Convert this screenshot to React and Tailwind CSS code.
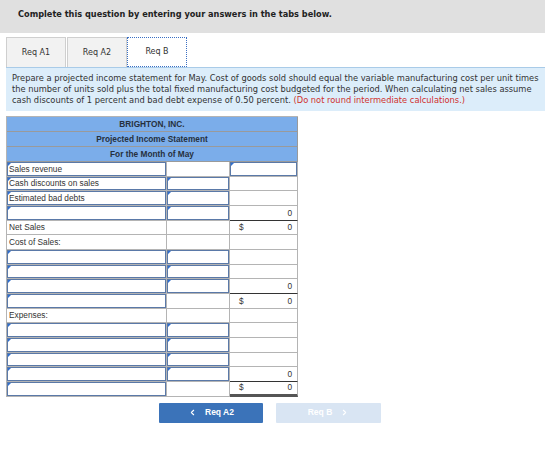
import { ChevronLeft, ChevronRight } from 'lucide-react';

const verdana = { fontFamily: '"DejaVu Sans", Verdana, sans-serif' };
const arial = { fontFamily: '"Liberation Sans", Arial, sans-serif' };

// c1/c2/c3 cell kinds: t = text, s = select (triangle), i = input, b = blank, v = value
const rows = [
  { c1: ['s', 'Sales revenue'], c2: ['b'], c3: ['i'] },
  { c1: ['s', 'Cash discounts on sales'], c2: ['i'], c3: ['b'] },
  { c1: ['s', 'Estimated bad debts'], c2: ['i'], c3: ['b'] },
  { c1: ['s'], c2: ['i'], c3: ['v', '0'], line: 'single' },
  { c1: ['t', 'Net Sales'], c2: ['b'], c3: ['v', '0', true] },
  { c1: ['t', 'Cost of Sales:'], c2: ['b'], c3: ['b'] },
  { c1: ['s'], c2: ['i'], c3: ['b'] },
  { c1: ['s'], c2: ['i'], c3: ['b'] },
  { c1: ['s'], c2: ['i'], c3: ['v', '0'], line: 'single' },
  { c1: ['s'], c2: ['b'], c3: ['v', '0', true] },
  { c1: ['t', 'Expenses:'], c2: ['b'], c3: ['b'] },
  { c1: ['s'], c2: ['i'], c3: ['b'] },
  { c1: ['s'], c2: ['i'], c3: ['b'] },
  { c1: ['s'], c2: ['i'], c3: ['b'] },
  { c1: ['s'], c2: ['i'], c3: ['v', '0'], line: 'single' },
  { c1: ['s'], c2: ['b'], c3: ['v', '0', true], line: 'double' },
];

const Cell = ({ kind, text, dollar }) => {
  if (kind === 's' || kind === 'i') {
    return (
      <div className="relative h-full border-[1.5px] border-[#5a79a8] bg-white flex items-center pl-[1px] text-[#333]">
        <span className="absolute top-0 left-0 w-0 h-0 border-t-[3px] border-t-[#2f6fd0] border-r-[3px] border-r-transparent" />
        {text}
      </div>
    );
  }
  if (kind === 't') {
    return <div className="h-full flex items-center pl-[2px] text-[#333]">{text}</div>;
  }
  if (kind === 'v') {
    return (
      <div className="h-full flex items-center justify-between pl-[9px] pr-[5px] text-[#333]">
        <span>{dollar ? '$' : ''}</span>
        <span>{text}</span>
      </div>
    );
  }
  return <div className="h-full" />;
};

const Row = ({ row }) => {
  const c3Border =
    row.line === 'double'
      ? 'border-b-[3px] border-b-[#555]'
      : row.line === 'single'
      ? 'border-b border-b-[#333]'
      : 'border-b border-b-[#b4b4b4]';
  return (
    <div className="flex h-[14.67px]">
      <div className="w-[160px] border-r border-b border-[#b4b4b4]">
        <Cell kind={row.c1[0]} text={row.c1[1]} />
      </div>
      <div className="w-[63px] border-r border-b border-[#b4b4b4]">
        <Cell kind={row.c2[0]} text={row.c2[1]} />
      </div>
      <div className={`w-[68px] border-r border-r-[#b4b4b4] ${c3Border}`}>
        <Cell kind={row.c3[0]} text={row.c3[1]} dollar={row.c3[2]} />
      </div>
    </div>
  );
};

export default function App() {
  return (
    <div className="w-[560px] h-[459px] bg-white relative overflow-hidden">
      <div className="w-[545px] h-[33px] bg-[#e0e0e0] pl-[18px] pt-[8px]">
        <p className="text-[8.2px] font-bold text-[#222]" style={verdana}>
          Complete this question by entering your answers in the tabs below.
        </p>
      </div>

      <div className="ml-[6px] w-[539px] mt-[4px] flex border-b border-b-[#a9cbe8]" style={verdana}>
        <div className="w-[60px] h-[30px] bg-[#f2f2f2] border border-[#cfcfcf] border-b-0 flex items-center justify-center text-[8px] text-[#333]">
          Req A1
        </div>
        <div className="ml-[1px] w-[60px] h-[30px] bg-[#f2f2f2] border border-[#cfcfcf] border-b-0 flex items-center justify-center text-[8px] text-[#333]">
          Req A2
        </div>
        <div className="w-[60px] h-[30px] bg-white border border-dotted border-[#3a6fc4] flex items-center justify-center text-[8px] text-[#333]">
          Req B
        </div>
      </div>

      <div
        className="ml-[6px] w-[539px] bg-[#dcedfa] px-[6px] pt-[5px] pb-[5px] text-[8.3px] leading-[11px] text-[#333] whitespace-nowrap"
        style={verdana}
      >
        Prepare a projected income statement for May. Cost of goods sold should equal the variable manufacturing cost per unit times
        <br />
        the number of units sold plus the total fixed manufacturing cost budgeted for the period. When calculating net sales assume
        <br />
        cash discounts of 1 percent and bad debt expense of 0.50 percent.{' '}
        <span className="text-[#d0312d]">(Do not round intermediate calculations.)</span>
      </div>

      <div className="ml-[6px] mt-[5px] w-[292px] border-l border-t border-[#b4b4b4] text-[8.3px]" style={arial}>
        {['BRIGHTON, INC.', 'Projected Income Statement', 'For the Month of May'].map((t) => (
          <div
            key={t}
            className="h-[15px] bg-[#7badea] border-r border-b border-[#9a9a9a] flex items-center justify-center font-bold text-[#26303d]"
          >
            {t}
          </div>
        ))}
        {rows.map((r, i) => (
          <Row key={i} row={r} />
        ))}
      </div>

      <div className="ml-[159px] mt-[6px] flex gap-[13px]" style={arial}>
        <div className="w-[104px] h-[20px] bg-[#3b73b9] rounded-[1px] flex items-center justify-center gap-[8px] text-white text-[8.5px] font-bold">
          <ChevronLeft size={9} strokeWidth={3} />
          <span>Req A2</span>
        </div>
        <div className="w-[105px] h-[20px] bg-[#d9e5f3] rounded-[1px] flex items-center justify-center gap-[8px] text-white text-[8.5px] font-bold">
          <span>Req B</span>
          <ChevronRight size={9} strokeWidth={3} />
        </div>
      </div>
    </div>
  );
}
